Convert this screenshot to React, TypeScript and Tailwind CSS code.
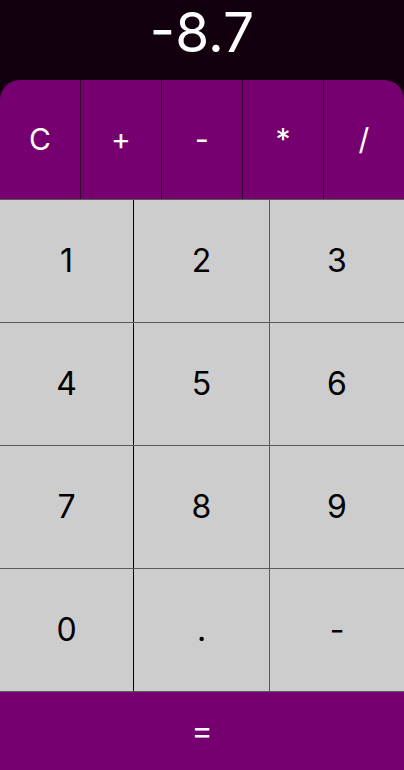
import React from "react";

const ops = ["C", "+", "-", "*", "/"];
const rows = [
  ["1", "2", "3"],
  ["4", "5", "6"],
  ["7", "8", "9"],
  ["0", ".", "-"],
];

export default function App() {
  return (
    <div
      className="w-[404px] h-[770px] flex flex-col bg-[#12000e] overflow-hidden"
      style={{ fontFamily: "Inter, 'Liberation Sans', sans-serif" }}
    >
      <div className="h-[80px] flex items-center justify-center text-white text-[55px] leading-none pb-[16px]">
        -8.7
      </div>
      <div className="h-[119px] flex rounded-t-[20px] bg-[#760070] overflow-hidden">
        {ops.map((o, i) => (
          <div
            key={i}
            className={
              "flex-1 flex items-center justify-center text-white text-[30px] " +
              (i < 4 ? "border-r border-[#2e002b]" : "")
            }
          >
            {o}
          </div>
        ))}
      </div>
      {rows.map((r, ri) => (
        <div key={ri} className="h-[123px] flex border-t border-[#5a5a5a] bg-[#cdcdcd]">
          <div className="w-[134px] flex items-center justify-center text-black text-[32px] border-r border-black">
            {r[0]}
          </div>
          <div className="w-[136px] flex items-center justify-center text-black text-[32px] border-r border-[#5a5a5a]">
            {r[1]}
          </div>
          <div className="flex-1 flex items-center justify-center text-black text-[32px]">
            {r[2]}
          </div>
        </div>
      ))}
      <div className="flex-1 flex items-center justify-center bg-[#760070] text-white text-[32px] border-t border-[#5a5a5a]">
        =
      </div>
    </div>
  );
}
